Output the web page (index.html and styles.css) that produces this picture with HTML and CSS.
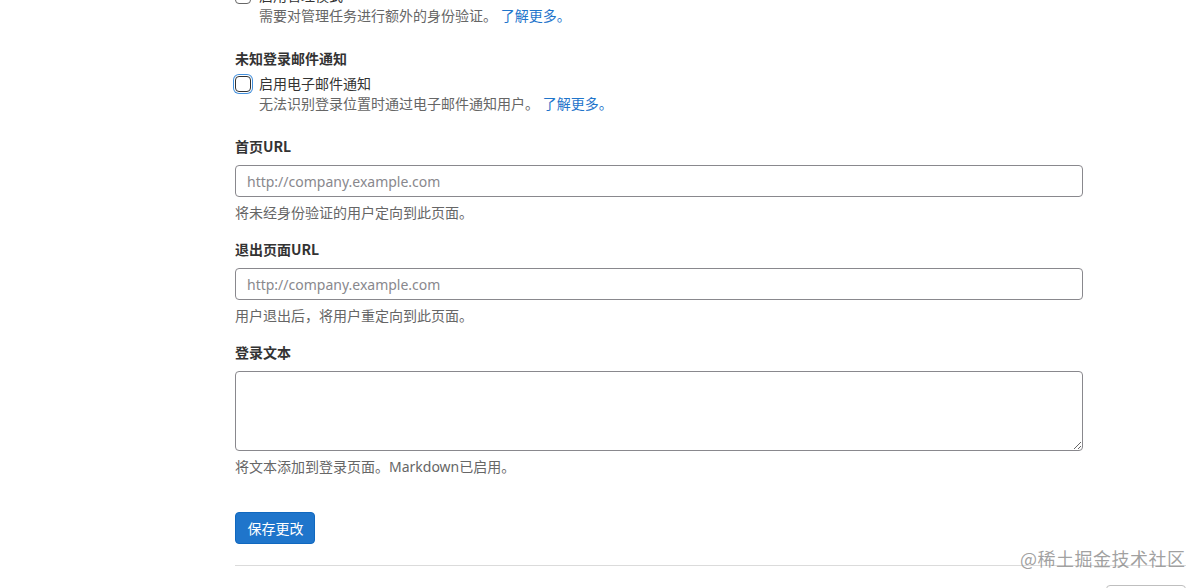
FILE: index.html
```html
<!DOCTYPE html>
<html lang="zh-CN">
<head>
<meta charset="utf-8">
<title>设置</title>
<link rel="stylesheet" href="styles.css">
</head>
<body>
<div class="page">
  <form class="settings">
    <div class="group check-group first">
      <div class="check-row">
        <span class="checkbox"></span>
        <span class="check-label">启用管理模式</span>
      </div>
      <div class="check-help">需要对管理任务进行额外的身份验证。 <a class="link" href="#">了解更多。</a></div>
    </div>

    <div class="group check-group">
      <div class="label">未知登录邮件通知</div>
      <div class="check-row">
        <span class="checkbox focused"></span>
        <span class="check-label">启用电子邮件通知</span>
      </div>
      <div class="check-help">无法识别登录位置时通过电子邮件通知用户。 <a class="link" href="#">了解更多。</a></div>
    </div>

    <div class="group">
      <div class="label">首页URL</div>
      <input class="field" type="text" placeholder="http://company.example.com">
      <div class="help">将未经身份验证的用户定向到此页面。</div>
    </div>

    <div class="group">
      <div class="label">退出页面URL</div>
      <input class="field" type="text" placeholder="http://company.example.com">
      <div class="help">用户退出后，将用户重定向到此页面。</div>
    </div>

    <div class="group">
      <div class="label">登录文本</div>
      <textarea class="field area"></textarea>
      <div class="help">将文本添加到登录页面。Markdown已启用。</div>
    </div>

    <div class="actions">
      <button class="btn-primary" type="button">保存更改</button>
    </div>
  </form>
  <div class="divider"></div>
  <div class="next-row">
    <span class="next-btn"></span>
  </div>
</div>
<div class="watermark">@稀土掘金技术社区</div>
</body>
</html>
```

FILE: styles.css
```css
html, body {
  margin: 0;
  padding: 0;
  background: #ffffff;
  overflow: hidden;
}

body {
  font-family: "Noto Sans", "Noto Sans CJK SC", sans-serif;
  font-size: 14px;
  line-height: 20px;
  color: #333333;
  height: 588px;
  position: relative;
}

.page {
  padding-left: 235px;
  margin-top: -14px;
  width: 951px;
  height: 602px;
  overflow: hidden;
}

.settings {
  width: 848px;
}

.group {
  margin-bottom: 16px;
}

.check-group {
  margin-bottom: 22px;
}

.label {
  font-weight: 700;
  font-family: "Noto Sans CJK SC", "Noto Sans", sans-serif;
  margin-bottom: 9px;
}

.check-group .label {
  margin-bottom: 6px;
}

.check-row {
  display: flex;
  align-items: center;
  gap: 8px;
  height: 20px;
}

.checkbox {
  box-sizing: border-box;
  width: 16px;
  height: 16px;
  border: 1px solid #666666;
  border-radius: 4px;
  background: #ffffff;
  flex: none;
}

.checkbox.focused {
  border-color: #333333;
  box-shadow: 0 0 0 1px #ffffff, 0 0 0 2px #428fdc;
}

.check-label {
  color: #333333;
}

.check-help {
  padding-left: 24px;
  color: #666666;
}

.link {
  color: #1f75cb;
  text-decoration: none;
}

.field {
  display: block;
  box-sizing: border-box;
  width: 848px;
  height: 32px;
  margin: 0;
  padding: 0 11px;
  border: 1px solid #89888d;
  border-radius: 4px;
  font-family: "Noto Sans", "Noto Sans CJK SC", sans-serif;
  font-size: 14px;
  color: #333333;
  background: #ffffff;
  outline: none;
}

.field::placeholder {
  color: #89888d;
}

.area {
  height: 80px;
  resize: vertical;
}

.help {
  margin-top: 6px;
  color: #666666;
}

.actions {
  padding-top: 19px;
}

.btn-primary {
  display: block;
  box-sizing: border-box;
  width: 80px;
  height: 32px;
  padding: 0 0 0 1px;
  white-space: nowrap;
  border: 1px solid #1068bf;
  border-radius: 4px;
  background: #1f75cb;
  color: #ffffff;
  font-family: "Noto Sans CJK SC", sans-serif;
  font-size: 14px;
  line-height: 20px;
  cursor: pointer;
}

.divider {
  margin-top: 21px;
  height: 1px;
  background: #dbdbdb;
}

.next-row {
  display: flex;
  justify-content: flex-end;
  padding-top: 19px;
}

.next-btn {
  display: block;
  width: 78px;
  height: 30px;
  border: 1px solid #bfbfbf;
  border-radius: 4px;
}

.watermark {
  position: absolute;
  left: 1020px;
  top: 545px;
  font-family: "Noto Sans CJK SC", sans-serif;
  font-size: 18px;
  line-height: 26px;
  color: rgba(130, 130, 130, 0.75);
  letter-spacing: 0.5px;
}
```
